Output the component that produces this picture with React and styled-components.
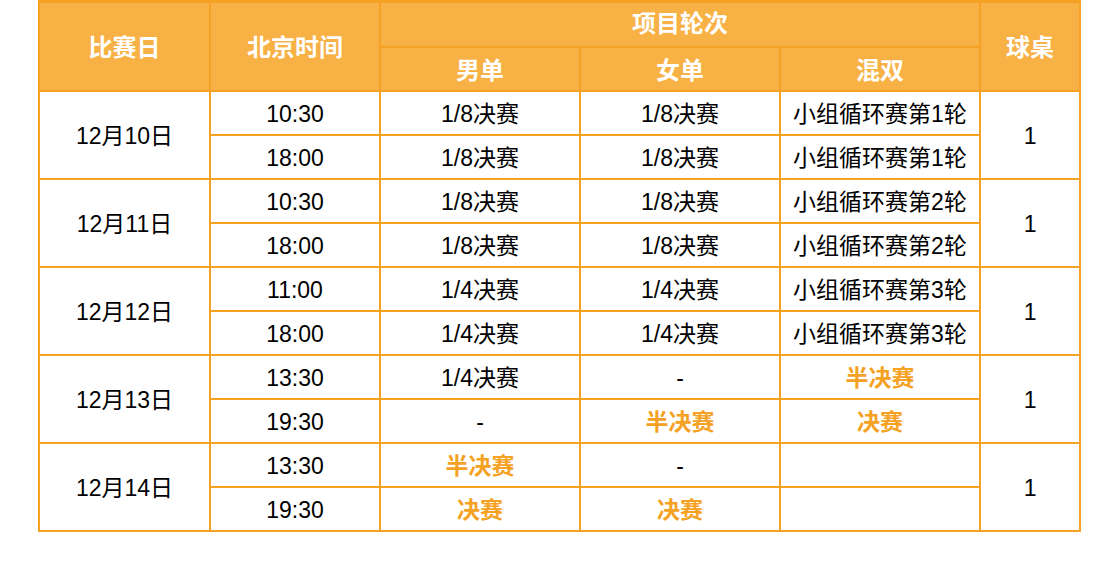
import React from "react";
import styled, { createGlobalStyle } from "styled-components";

const GlobalStyle = createGlobalStyle`
  body {
    margin: 0;
    background: #fff;
    font-family: "Liberation Sans", "Noto Sans CJK SC", sans-serif;
  }
`;

const schedule = [
  {
    date: "12月10日",
    table: "1",
    rows: [
      { time: "10:30", ms: "1/8决赛", ws: "1/8决赛", xd: "小组循环赛第1轮" },
      { time: "18:00", ms: "1/8决赛", ws: "1/8决赛", xd: "小组循环赛第1轮" },
    ],
  },
  {
    date: "12月11日",
    table: "1",
    rows: [
      { time: "10:30", ms: "1/8决赛", ws: "1/8决赛", xd: "小组循环赛第2轮" },
      { time: "18:00", ms: "1/8决赛", ws: "1/8决赛", xd: "小组循环赛第2轮" },
    ],
  },
  {
    date: "12月12日",
    table: "1",
    rows: [
      { time: "11:00", ms: "1/4决赛", ws: "1/4决赛", xd: "小组循环赛第3轮" },
      { time: "18:00", ms: "1/4决赛", ws: "1/4决赛", xd: "小组循环赛第3轮" },
    ],
  },
  {
    date: "12月13日",
    table: "1",
    rows: [
      { time: "13:30", ms: "1/4决赛", ws: "-", xd: "半决赛" },
      { time: "19:30", ms: "-", ws: "半决赛", xd: "决赛" },
    ],
  },
  {
    date: "12月14日",
    table: "1",
    rows: [
      { time: "13:30", ms: "半决赛", ws: "-", xd: "" },
      { time: "19:30", ms: "决赛", ws: "决赛", xd: "" },
    ],
  },
];

const isFinal = (v) => v === "半决赛" || v === "决赛";

const App = () => {
  return (
    <Page>
      <GlobalStyle />
      <Table>
        <colgroup>
          <col style={{ width: 171 }} />
          <col style={{ width: 170 }} />
          <col style={{ width: 200 }} />
          <col style={{ width: 200 }} />
          <col style={{ width: 200 }} />
          <col style={{ width: 100 }} />
        </colgroup>
        <thead>
          <HeadRow $h={45}>
            <Th rowSpan={2}>比赛日</Th>
            <Th rowSpan={2}>北京时间</Th>
            <Th colSpan={3} $lift>项目轮次</Th>
            <Th rowSpan={2}>球桌</Th>
          </HeadRow>
          <HeadRow $h={44}>
            <Th>男单</Th>
            <Th>女单</Th>
            <Th>混双</Th>
          </HeadRow>
        </thead>
        <tbody>
          {schedule.map((day) =>
            day.rows.map((r, i) => (
              <BodyRow key={day.date + i}>
                {i === 0 && <Td rowSpan={2}>{day.date}</Td>}
                <Td>{r.time}</Td>
                <Td $final={isFinal(r.ms)}>{r.ms}</Td>
                <Td $final={isFinal(r.ws)}>{r.ws}</Td>
                <Td $final={isFinal(r.xd)}>{r.xd}</Td>
                {i === 0 && <Td rowSpan={2}>{day.table}</Td>}
              </BodyRow>
            ))
          )}
        </tbody>
      </Table>
    </Page>
  );
};

const Page = styled.div`
  width: 1120px;
  height: 576px;
  padding-left: 38px;
  box-sizing: border-box;
  overflow: hidden;
`;

const Table = styled.table`
  border-collapse: collapse;
  table-layout: fixed;
  width: 1041px;
  border-top: 3px solid #f5a123;
`;

const HeadRow = styled.tr`
  height: ${(p) => p.$h}px;
  background: #f8b145;
`;

const BodyRow = styled.tr`
  height: 44px;
`;

const Th = styled.th`
  border: 2px solid #f5a123;
  color: #fff;
  font-family: "Noto Sans CJK SC", sans-serif;
  font-size: 24px;
  font-weight: 700;
  line-height: 28px;
  padding: ${(p) => (p.$lift ? "0 0 4px" : "0")};
  text-align: center;
  vertical-align: middle;
`;

const Td = styled.td`
  border: 2px solid #f5a123;
  color: ${(p) => (p.$final ? "#f5a123" : "#000")};
  font-size: 23px;
  font-weight: ${(p) => (p.$final ? 700 : 400)};
  line-height: 26px;
  padding: 3px 0 0;
  text-align: center;
  vertical-align: middle;
  white-space: nowrap;
`;

export default App;
